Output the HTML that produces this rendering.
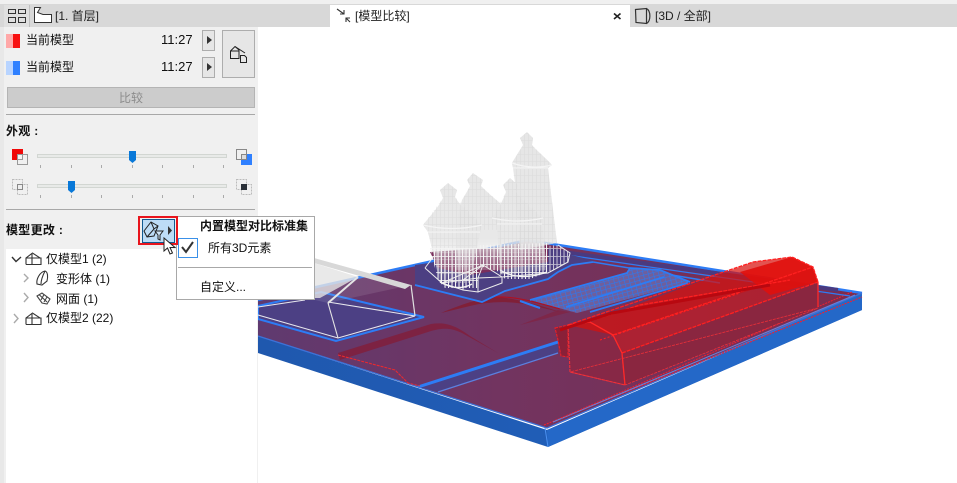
<!DOCTYPE html>
<html><head><meta charset="utf-8"><style>
html,body{margin:0;padding:0;background:#fff}
#r{position:relative;width:957px;height:483px;overflow:hidden;background:#fff;font:12px "Liberation Sans","Noto Sans CJK SC",sans-serif;color:#111}
#r div{position:absolute}
.t{white-space:nowrap;line-height:16px}
.b{font-weight:bold}
svg{position:absolute;left:0;top:0}
</style></head><body><div id="r">
<svg width="957" height="483" viewBox="0 0 957 483">
<defs>
<linearGradient id="top" x1="0" y1="0" x2="1" y2="0"><stop offset="0" stop-color="#5f3a70"/><stop offset=".4" stop-color="#723460"/><stop offset="1" stop-color="#7c2c4e"/></linearGradient>
<linearGradient id="sl" x1="0" y1="0" x2="1" y2="0"><stop offset="0" stop-color="#1f58ae"/><stop offset="1" stop-color="#2263c0"/></linearGradient>
<linearGradient id="fade" gradientUnits="userSpaceOnUse" x1="0" y1="130" x2="0" y2="285"><stop offset="0" stop-color="#e6e6e6"/><stop offset=".7" stop-color="#e6e6e6" stop-opacity=".92"/><stop offset=".82" stop-color="#e6e6e6" stop-opacity=".4"/><stop offset="1" stop-color="#e6e6e6" stop-opacity=".05"/></linearGradient>
<pattern id="wire" width="3.500" height="8" patternUnits="userSpaceOnUse"><path d="M.5 0V8" stroke="#f4f4f4" stroke-width="1.100"/><path d="M0 .5H3.500" stroke="#f4f4f4" stroke-width=".8"/></pattern>
<pattern id="tex" width="4" height="7" patternUnits="userSpaceOnUse"><path d="M.5 0V7M0 .5H4" stroke="#d8d8d8" stroke-width=".6"/></pattern>
<pattern id="grid" width="5" height="4" patternUnits="userSpaceOnUse" patternTransform="rotate(-15)"><rect width="5" height="4" fill="#6f5f9c"/><path d="M0 0H5M0 0V4" stroke="#2d78ee" stroke-width="1.300"/></pattern>
</defs>
<!-- slab -->
<polygon points="258,336 547,430 862,293 862,310 548,447 258,353" fill="url(#sl)"/>
<polygon points="547,430 862,293 862,310 548,447" fill="#2468c8"/>
<polygon points="258,300 527,240 862,293 547,428 258,336" fill="url(#top)"/>
<path d="M258,300 527,240 862,293" fill="none" stroke="#2d7cf5" stroke-width="2.500"/>
<path d="M258,336 547,428 862,293" fill="none" stroke="#3d72d8" stroke-width="1.300"/>
<path d="M545,428 548,447" stroke="#4a90f0" stroke-width="1" fill="none"/>
<path d="M544,425 862,297" stroke="#f02030" stroke-width="1.100" stroke-dasharray="2 1" fill="none"/>
<path d="M553,422 855,295" stroke="#6a80d8" stroke-width="1.100" fill="none"/>
<path d="M561,418 852,292" stroke="#f02030" stroke-width="1" stroke-dasharray="2 1" fill="none"/>
<path d="M527,247 838,290" fill="none" stroke="#4a3a80" stroke-width="4"/>
<path d="M560,254 850,296" fill="none" stroke="#2d7cf5" stroke-width="1.300"/>
<!-- left lot -->
<polygon points="258,306 321,292 424,317 336,341 258,319" fill="#4c4084" stroke="#2d7cf5" stroke-width="2"/>
<path d="M258,307 305,300M328,302 415,316 338,338 258,315" fill="none" stroke="#e8e8ee" stroke-width="1"/>
<polygon points="314,258 411,285 328,303 315,300" fill="#fff" fill-opacity=".1"/>
<polygon points="314,258 314,263 405,289 411,285" fill="#d8d8d8"/>
<polygon points="314,263 358,277 320,298 314,298" fill="#e4e4e4" fill-opacity=".8"/>
<path d="M328,303 338,338" stroke="#e4e4e4" stroke-width="1.100"/>
<path d="M358,277 328,303" stroke="#e4e4e4" stroke-width="2"/>
<path d="M411,285 415,316" fill="none" stroke="#e0e0e0" stroke-width="1.200"/>
<!-- roads -->
<polygon points="418,387 558,342 558,353 438,392" fill="#4c4084"/>
<path d="M418,387 558,342" stroke="#2d7cf5" stroke-width="3"/>
<path d="M438,392 558,353" stroke="#5b80e0" stroke-width="1.300"/>
<!-- hill -->
<path d="M338,353 431,324 C445,322 455,325 470,336 L498,353 L462,333 C450,327 440,328 428,332 L340,360Z" fill="#80203e" fill-opacity=".9"/>
<path d="M338,355 395,370 408,383 420,386" fill="none" stroke="#e82a30" stroke-width="1.100" stroke-dasharray="3 1"/>
<path d="M441,313 C460,305 480,298 495,297 C510,297 540,305 560,312 L530,305 C510,301 490,301 470,306Z" fill="#802038"/>
<path d="M495,297 C515,296 535,302 560,309" fill="none" stroke="#b01020" stroke-width="1.100"/>
<path d="M520,325 L558,310 L570,312 L540,320Z" fill="#84203c" opacity=".6"/>
<!-- castle lot -->
<polygon points="415,285 482,302 505,290 548,278 558,272 572,265 595,261 540,247 415,265" fill="#4c3f82"/>
<path d="M415,285 482,302 505,291 548,279 558,272 572,265 593,262" fill="none" stroke="#2d7cf5" stroke-width="1.800"/>
<path d="M593,262 720,283" fill="none" stroke="#2d7cf5" stroke-width="1.500"/>
<path d="M520,301 540,308" stroke="#2d7cf5" stroke-width="2"/>
<polygon points="430,252 548,244 548,262 470,275 438,268" fill="#7a2f5c"/>
<!-- grid -->
<polygon points="530,300 627,273 630,268 660,270 690,282 577,313" fill="url(#grid)"/>
<path d="M530,300 627,273 630,268 660,270 690,282M566,307 664,277M590,312 688,283" fill="none" stroke="#2d7cf5" stroke-width="1.800"/>
<!-- red building -->
<polygon points="555,328 568,325 568,357 561,356 558,340" fill="#8a2038" stroke="#e82028" stroke-width="1.100" stroke-dasharray="3 1"/>
<polygon points="568,325 570,372 625,385 622,353 613,335 590,322" fill="#8e2540" fill-opacity=".75" stroke="#f03038" stroke-width="1.100" stroke-dasharray="3 1"/>
<polygon points="622,353 818,282 818,308 625,385" fill="#8a2640"/>
<polygon points="570,372 625,385 818,308" fill="none" stroke="#f03038" stroke-width=".8" stroke-dasharray="3 1"/>
<polygon points="568,325 590,322 753,262 792,257 813,267 818,282 622,353 613,335" fill="#d8100c" fill-opacity=".72"/>
<polygon points="613,335 622,353 818,282 813,267 760,287" fill="#a02840" fill-opacity=".6"/>
<polygon points="740,272 792,257 813,267 818,282 770,295" fill="#e0100c" fill-opacity=".9"/>
<path d="M613,335 813,267M622,353 818,282M568,325 753,262 792,257 813,267 818,282M568,328 640,305 790,280" fill="none" stroke="#ff2020" stroke-width="1.300" stroke-dasharray="4 1"/>
<path d="M568,325 590,322 613,335 622,353 625,385M818,282 818,307" fill="none" stroke="#ff2828" stroke-width="1.300"/>
<path d="M560,330 612,313 770,285" fill="none" stroke="#b80810" stroke-width="3"/>
<path d="M600,340 740,293" stroke="#ff2020" stroke-width="1" stroke-dasharray="2 2"/>
<!-- castle -->
<path d="M527,132 533,138 532,145 C538,152 546,158 552,165 L548,168 557,243 520,250 516,190 513,168 512,163 C516,156 520,150 523,145 L520,138Z" fill="url(#fade)"/>
<path d="M473,173 483,180 481,186 C487,192 494,198 500,203 L502,270 456,270 458,215 462,200 C465,195 468,190 470,186 L467,180Z" fill="url(#fade)"/>
<path d="M448,183 457,190 455,197 C462,208 472,218 482,225 L480,232 470,283 440,283 428,232 423,225 C430,216 438,208 443,198 L440,190Z" fill="url(#fade)"/>
<path d="M510,178 518,185 516,192 C523,202 534,212 543,218 L542,224 547,270 500,275 497,224 492,218 C498,210 503,200 506,192 L503,185Z" fill="url(#fade)"/>
<path d="M527,132 533,138 532,145 552,165 548,168 557,243 520,250 513,168 512,163 523,145 520,138Z" fill="url(#tex)" opacity=".7"/>
<path d="M448,183 457,190 455,197 482,225 480,232 470,283 440,283 428,232 423,225 443,198 440,190Z" fill="url(#tex)" opacity=".7"/>
<path d="M510,178 518,185 516,192 543,218 542,224 547,270 500,275 497,224 492,218 506,192 503,185Z" fill="url(#tex)" opacity=".7"/>
<path d="M473,173 483,180 481,186 500,203 502,230 458,230 462,200 470,186 467,180Z" fill="url(#tex)" opacity=".7"/>
<path d="M428,232 480,232M497,224 542,224M513,168 548,168M423,225 Q452,232 482,225M492,218 Q518,224 543,218M512,163 Q532,170 552,165" fill="none" stroke="#f4f4f4" stroke-width="1.200"/>
<!-- lower wire -->
<polygon points="430,248 480,248 478,288 445,288 438,280" fill="url(#wire)"/>
<polygon points="480,245 548,243 550,271 530,279 505,279 500,272 480,266" fill="url(#wire)"/>
<polygon points="547,246 558,245 570,253 568,262 550,272" fill="url(#wire)" opacity=".7"/>
<path d="M425,268 442,283 463,290 478,292 502,283 502,277 548,273 568,262 570,253 558,245M425,268 434,256M483,265 463,280 478,278 483,265 502,277 478,278 478,292M463,280 463,290M483,265 442,283M442,283 463,280" fill="none" stroke="#ececec" stroke-width="1"/>
<path d="M500,270 Q520,282 547,272M440,282 Q458,292 472,284" fill="none" stroke="#f4f4f4" stroke-width="1.300"/>
</svg>

<div style="left:0;top:0;width:957px;height:5px;background:#f0f0f0"></div>
<div style="left:0;top:4px;width:957px;height:23px;background:#d8d8d8"></div>
<div style="left:0;top:27px;width:4px;height:456px;background:#e8e8e8"></div>
<div style="left:4px;top:27px;width:254px;height:456px;background:#f0f0f0"></div>
<div style="left:6px;top:249px;width:251px;height:234px;background:#fff"></div>
<div style="left:330px;top:5px;width:300px;height:22px;background:#fff"></div>
<div style="left:4px;top:5px;width:25px;height:22px;background:#e0e0e0"></div>
<div style="left:29px;top:5px;width:1px;height:22px;background:#c0c0c0"></div>

<!-- compare controls -->
<div style="left:6px;top:34px;width:14px;height:14px;background:linear-gradient(90deg,#ffa8a8 50%,#f80f0f 50%)"></div>
<div style="left:6px;top:61px;width:14px;height:14px;background:linear-gradient(90deg,#b8d4ff 50%,#2f80ff 50%)"></div>
<div class="t" style="left:26px;top:32px">当前模型</div>
<div class="t" style="left:26px;top:59px">当前模型</div>
<div class="t" style="left:161px;top:32px;font-size:13px">11:27</div>
<div class="t" style="left:161px;top:59px;font-size:13px">11:27</div>
<div style="left:202px;top:30px;width:11px;height:19px;background:#e6e6e6;border:1px solid #adadad"></div>
<div style="left:202px;top:57px;width:11px;height:19px;background:#e6e6e6;border:1px solid #adadad"></div>
<div style="left:222px;top:30px;width:31px;height:46px;background:#e6e6e6;border:1px solid #adadad"></div>
<div style="left:7px;top:87px;width:246px;height:19px;background:#cccccc;border:1px solid #b4b4b4"></div>
<div class="t" style="left:119px;top:90px;color:#8c8c8c">比较</div>
<div style="left:6px;top:114px;width:249px;height:1px;background:#a8a8a8"></div>
<div class="t b" style="left:6px;top:123px;letter-spacing:.3px">外观 :</div>
<div style="left:6px;top:209px;width:249px;height:1px;background:#a8a8a8"></div>
<div class="t b" style="left:6px;top:222px;letter-spacing:.3px">模型更改 :</div>

<svg width="957" height="483" viewBox="0 0 957 483">
<!-- tab icons -->
<g fill="none" stroke="#333" stroke-width="1">
<rect x="8.500" y="9.500" width="7" height="4"/><rect x="18.500" y="9.500" width="7" height="4"/><rect x="8.500" y="17.500" width="7" height="5"/><rect x="18.500" y="17.500" width="7" height="5"/>
<path d="M34.500 7.500H40.500L37.500 12.500L43 14.500H51.500V22.500H34.500Z" fill="#fff"/>
<path d="M337 9 344 14M340 14H344V10M350 22 346 18M346 22V18H350" stroke-width="1.100"/>
<path d="M635.500 9.500 646.500 8.500V23.500L636 22.500ZM646.500 8.500C651 11 651 21 646.500 23.500" stroke-width="1.200"/>
</g>
<path d="M614 13.500 620.500 19M620.500 13.500 614 19" stroke="#222" stroke-width="1.600"/>
<!-- arrows -->
<path d="M207 36 212 40 207 44ZM207 63 212 67 207 71Z" fill="#333"/>
<!-- big button icon -->
<g fill="none" stroke="#222" stroke-width="1">
<path d="M230.500 58.500V51L235 46.500 239 50V58.500ZM231 51H239"/>
<path d="M235 46.500 245 53"/>
<path d="M240.500 55.500H244.500L246.500 57.500V62.500H240.500Z" fill="#e6e6e6"/>
</g>
<!-- slider icons -->
<rect x="12" y="149" width="11" height="11" fill="#f00808"/>
<rect x="17.500" y="154.500" width="10" height="10" fill="none" stroke="#999"/>
<rect x="17.500" y="154.500" width="5" height="5" fill="#f4f4f4" stroke="#999"/>
<rect x="241" y="154" width="11" height="11" fill="#2f80ff"/>
<rect x="236.500" y="149.500" width="10" height="10" fill="none" stroke="#888"/>
<rect x="241.500" y="154.500" width="5" height="5" fill="#ddd" stroke="#888"/>
<g fill="none" stroke="#bbb" stroke-dasharray="2 1">
<rect x="12.500" y="179.500" width="10" height="10"/><rect x="17.500" y="184.500" width="10" height="10"/>
<rect x="236.500" y="179.500" width="10" height="10"/><rect x="241.500" y="184.500" width="10" height="10"/>
</g>
<rect x="17.500" y="184.500" width="5" height="5" fill="#eee" stroke="#888"/>
<rect x="241" y="184" width="6" height="6" fill="#2a3038"/>
<!-- sliders -->
<rect x="37.500" y="154.500" width="189" height="3" fill="#e8eae8" stroke="#d2d6d2"/>
<rect x="37.500" y="184.500" width="189" height="3" fill="#e8eae8" stroke="#d2d6d2"/>
<path d="M40.500 165V168M71.500 165V168M101.500 165V168M132.500 165V168M162.500 165V168M193.500 165V168M223.500 165V168M40.500 195V198M71.500 195V198M101.500 195V198M132.500 195V198M162.500 195V198M193.500 195V198M223.500 195V198" stroke="#aaa"/>
<path d="M129 151H136V160L132.500 163L129 160Z" fill="#0878d8"/>
<path d="M68 181H75V190L71.500 193L68 190Z" fill="#0878d8"/>
<!-- tree -->
<path d="M12 257 16 261.500 21 257" fill="none" stroke="#333" stroke-width="1.400"/>
<path d="M24 274 28 278 24 282M24 293 28 297.500 24 302" fill="none" stroke="#aaa" stroke-width="1.400"/>
<path d="M14 314 18 318.500 14 323" fill="none" stroke="#aaa" stroke-width="1.400"/>
<g fill="none" stroke="#333" stroke-width="1.100">
<path d="M26 264.500V258L32.500 253L40 258H41M26 264.500H41V258H26.500M32 264.500V254"/>
<path d="M26 324.500V318L32.500 313L40 318H41M26 324.500H41V318H26.500M32 324.500V314"/>
<path d="M37 284C36 279 40 272 45 271C48 272 48 277 47 281L42 285ZM41 284C41 280 43 275 45 271"/>
<path d="M37 296 42 293 50 299 47 304 42 303ZM39.500 295 47 302M44 294.500 41 300M47 297 44 302" stroke="#444"/>
</g>
</svg>

<!-- tree text -->
<div class="t" style="left:46px;top:251px">仅模型1 (2)</div>
<div class="t" style="left:56px;top:271px">变形体 (1)</div>
<div class="t" style="left:56px;top:291px">网面 (1)</div>
<div class="t" style="left:46px;top:310px">仅模型2 (22)</div>

<!-- tabs text -->
<div class="t" style="left:55px;top:8px;color:#222">[1. 首层]</div>
<div class="t" style="left:355px;top:8px;color:#222">[模型比较]</div>
<div class="t" style="left:655px;top:8px;color:#222">[3D / 全部]</div>

<!-- menu -->
<div style="left:176px;top:216px;width:137px;height:82px;background:#fff;border:1px solid #a8a8a8"></div>
<div class="t b" style="left:200px;top:218px">内置模型对比标准集</div>
<div style="left:178px;top:238px;width:18px;height:18px;border:1px solid #3a90e8;background:#fff"></div>
<div class="t" style="left:208px;top:240px">所有3D元素</div>
<div style="left:178px;top:267px;width:134px;height:1px;background:#a8a8a8"></div>
<div class="t" style="left:200px;top:279px">自定义...</div>
<svg width="957" height="483" viewBox="0 0 957 483">
<!-- filter button -->
<rect x="139" y="217" width="38" height="27" fill="#f0f0f0" stroke="#e8141c" stroke-width="2"/>
<rect x="142.500" y="219.500" width="32" height="23" fill="#bddcf6" stroke="#105a90"/>
<g fill="none" stroke="#222" stroke-width="1">
<path d="M144 231 151 222 158 226 154 236 147 237ZM151 222 154 229 158 226M154 229 147 237"/>
<path d="M155 231H163L160 235V240L158 239V235Z" fill="#d0e6f8"/>
</g>
<path d="M168 226 172 230.500 168 235Z" fill="#333"/>
<path d="M182 247 186 252 193 242" fill="none" stroke="#333" stroke-width="2"/>
<path d="M164 238V251L167.500 248L170 254L172.500 253L170 247.500H175Z" fill="#fff" stroke="#222" stroke-width="1"/>
</svg>
</div></body></html>
